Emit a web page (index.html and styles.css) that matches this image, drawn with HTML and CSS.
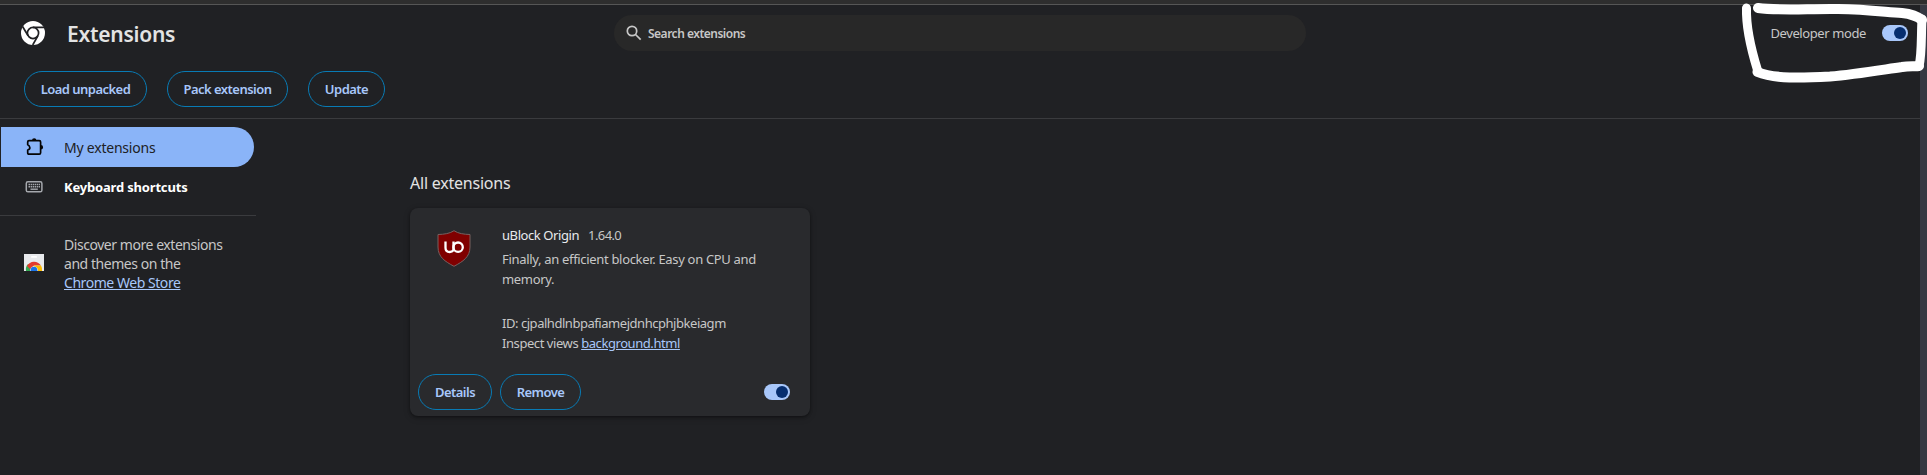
FILE: index.html
```html
<!DOCTYPE html>
<html lang="en">
<head>
<meta charset="utf-8">
<title>Extensions</title>
<link rel="stylesheet" href="styles.css">
</head>
<body>
<div class="window-edge"></div>
<div class="viewport">
<div class="page">
  <header class="toolbar">
    <svg class="logo" viewBox="0 0 24 24"><circle cx="12" cy="12" r="12" fill="#fff"/><g fill="none" stroke="#202124" stroke-width="1.7"><circle cx="12" cy="12" r="5.6"/><path d="M12 6.4H23M7.1 14.8 1.4 5.2M16.9 14.8 11.7 24"/></g></svg>
    <h1 class="title">Extensions</h1>
    <div class="search">
      <svg class="search-icon" viewBox="0 0 16 16"><g fill="none" stroke="#c7c7c7" stroke-width="1.7"><circle cx="6" cy="6" r="4.7"/><path d="m9.5 9.5 5.2 5.2"/></g></svg>
      <span class="search-text">Search extensions</span>
    </div>
    <div class="dev"><span class="dev-text">Developer mode</span><span class="toggle"></span></div>
  </header>
  <div class="actions">
    <button class="btn load">Load unpacked</button>
    <button class="btn pack">Pack extension</button>
    <button class="btn update">Update</button>
  </div>
  <div class="content">
    <nav class="sidebar">
      <a class="item active">
        <svg class="item-icon" viewBox="0 0 20 20"><path d="M4 3.6H14.2Q15.6 3.6 15.6 5V15.8Q15.6 17.2 14.2 17.2H4Q2.7 17.2 2.7 15.8V13Q5.2 12.5 4.8 10.4T2.7 7.8V5Q2.7 3.6 4 3.6Z" fill="none" stroke="#050505" stroke-width="1.7" stroke-linejoin="round"/><path d="M7 3.4a2.2 2.2 0 0 1 4.4 0ZM15.8 8a2.3 2.3 0 0 1 0 4.6Z" fill="#050505"/></svg>
        <span class="my">My extensions</span>
      </a>
      <a class="item">
        <svg class="item-icon" viewBox="0 0 20 20"><rect x="1.3" y="4.8" width="15.6" height="10" rx="1.6" fill="none" stroke="#a5a8ad" stroke-width="1.5"/><path d="M3.500 7.500H15M3.500 9.800H15" stroke="#a5a8ad" stroke-width="1.5" stroke-dasharray="1.5 .6"/><path d="M5.500 12.200H12.800" stroke="#a5a8ad" stroke-width="1.4"/></svg>
        <span class="keys">Keyboard shortcuts</span>
      </a>
      <div class="store">
        <svg class="store-icon" viewBox="0 0 20 17"><path fill="#e8eaed" d="M0 0h20v17H0z"/><rect x="7" y="2" width="6" height="1.8" rx=".9" fill="#fff"/><path d="M2 17A8 8 0 0 1 4 10L10 15V17Z" fill="#34a853"/><path d="M3 12A8.200 8.200 0 0 1 17 11.500H10L6 15Z" fill="#e33b2e"/><path d="M10 11.500H17A8 8 0 0 1 18 17H10Z" fill="#fbbc04"/><path d="M6 17A4 4.600 0 0 1 14 17Z" fill="#fff"/><path d="M6.500 17A3.500 4.300 0 0 1 13.500 17Z" fill="#1a73e8"/></svg>
        <p class="store-text">Discover more extensions<br>and themes on the<br><a class="link">Chrome Web Store</a></p>
      </div>
    </nav>
    <main class="main">
      <h2 class="heading">All extensions</h2>
      <article class="card">
        <div class="card-top">
          <svg class="shield" viewBox="0 0 34 37"><path d="M17 .7C13 3.500 7 4.400 1 4.500V17C1 27 8 31.500 17 36.300 26 31.500 33 27 33 17V4.500C27 4.400 21 3.500 17 .7Z" fill="#800000" stroke="#77605f"/><g fill="none" stroke="#fff" stroke-width="2.3"><path d="M8.500 11.400V17.700Q8.500 22 12.700 22 15.700 22 16.500 19.500V11.400"/><circle cx="21.100" cy="17.200" r="4.700"/></g></svg>
          <div class="details">
            <div class="name-row"><span class="name">uBlock Origin</span><span class="version">1.64.0</span></div>
            <p class="desc">Finally, an efficient blocker. Easy on CPU and<br>memory.</p>
            <div class="meta"><div class="id">ID: cjpalhdlnbpafiamejdnhcphjbkeiagm</div><div class="inspect">Inspect views <a class="link">background.html</a></div></div>
          </div>
        </div>
        <footer class="card-actions">
          <button class="btn detail">Details</button><button class="btn remove">Remove</button><span class="toggle"></span>
        </footer>
      </article>
    </main>
  </div>
</div>
<div class="scrollbar"></div>
</div>
<svg class="scribble" viewBox="0 0 200 90"><g fill="none" stroke="#fff" stroke-linecap="round" stroke-linejoin="round"><path stroke-width="9" d="M19.500 8C19 25 24 49 30.500 70"/><path stroke-width="10" d="M30.500 72C47 79 75 78 103 76.500 128 74.500 154 70 175 67 182 65.500 188 66.500 192 66"/><path stroke-width="9" d="M192 66C195 54 194 36 195 19"/><path stroke-width="10" d="M31 8C54 11 82 8.500 111 9 139 9.500 154 11.500 175 13 184 14 190 16 195 20"/></g></svg>
</body>
</html>
```
FILE: styles.css
```css
* { box-sizing: border-box; }
body { margin: 0; height: 475px; overflow: hidden; background: #202124; color: #c7c7c7; font-family: "Noto Sans", sans-serif; font-size: 13px; position: relative; white-space: nowrap; }
h1, h2, p { margin: 0; }
.window-edge { height: 5px; background: #2e2e2e; border-bottom: 1px solid #565656; }
.viewport { display: flex; height: 470px; }
.page { flex: 1; }
.scrollbar { width: 7px; background: #353842; }
.toolbar { display: grid; grid-template-columns: 24px 523px 692px 1fr; padding: 10px 12px 0 21px; height: 56px; align-items: start; }
.logo { width: 24px; height: 24px; margin-top: 6px; }
.title { font-size: 21px; line-height: 30px; font-weight: 600; color: #e3e3e3; margin-left: 22px; padding-top: 4px; letter-spacing: -.25px; }
.search { margin-left: 46px; width: 692px; height: 36px; margin-right: -46px; border-radius: 18px; background: #282828; display: flex; align-items: center; padding-left: 12px; gap: 6px; }
.search-icon { width: 16px; height: 16px; margin-top: -1px; }
.search-text { font-size: 12px; font-weight: 600; letter-spacing: -.5px; }
.dev { display: flex; justify-content: flex-end; align-items: center; height: 36px; gap: 16px; }
.dev-text { letter-spacing: -.4px; }
.toggle { width: 26px; height: 16px; border-radius: 8px; background: #a8c7fa; display: flex; justify-content: flex-end; align-items: center; padding-right: 2px; }
.toggle::after { content: ""; width: 12px; height: 12px; border-radius: 50%; background: #062e6f; }
.actions { height: 58px; padding: 10px 24px; display: flex; gap: 20px; border-bottom: 1px solid #3a3b3e; }
.btn { height: 36px; border: 1px solid #087bb5; border-radius: 18px; background: transparent; color: #a8c7fa; font: 600 13px/20px "Noto Sans", sans-serif; padding: 0; letter-spacing: -.53px; text-align: center; }
.load { width: 123px; }
.pack { width: 121px; }
.update { width: 77px; }
.content { display: flex; }
.sidebar { width: 256px; padding-top: 8px; }
.item { display: flex; align-items: center; height: 40px; margin-left: 1px; padding-left: 24px; gap: 19px; font-size: 14px; }
.item-icon { width: 20px; height: 20px; }
.my { letter-spacing: -.22px; }
.active { width: 253px; background: #8ab4f8; color: #202124; border-radius: 0 20px 20px 0; }
.keys { font-weight: 700; color: #fff; font-size: 13px; letter-spacing: -.18px; }
.store { margin-top: 8px; border-top: 1px solid #3a3b3e; padding: 19px 0 0 24px; display: flex; gap: 20px; }
.store-icon { width: 20px; height: 17px; margin-top: 19px; }
.store-text { line-height: 19px; font-size: 14px; letter-spacing: -.45px; }
.link { color: #a8c7fa; text-decoration: underline; }
.main { padding: 52px 0 0 154px; }
.heading { font-size: 16px; line-height: 24px; font-weight: 400; color: #e3e3e3; letter-spacing: -.22px; }
.card { width: 400px; height: 208px; margin-top: 13px; border-radius: 8px; background: #292a2d; box-shadow: 0 1px 3px #0006, 0 2px 7px #0003; display: flex; flex-direction: column; justify-content: space-between; padding: 17px 20px 6px 8px; }
.card-top { display: flex; padding-left: 19px; gap: 31px; }
.shield { width: 34px; height: 37px; margin-top: 5px; }
.name-row { display: flex; gap: 9px; line-height: 20px; }
.name { color: #e8eaed; letter-spacing: -.42px; }
.version { letter-spacing: -.6px; }
.desc { line-height: 20px; margin-top: 4px; letter-spacing: -.32px; }
.meta { margin-top: 24px; line-height: 20px; }
.id { letter-spacing: -.46px; }
.inspect { letter-spacing: -.43px; }
.card-actions { display: flex; gap: 8px; align-items: center; }
.detail { width: 74px; }
.remove { width: 81px; }
.card-actions .toggle { margin-left: auto; }
.scribble { position: absolute; left: 1727px; top: 0; width: 200px; height: 90px; }
```
